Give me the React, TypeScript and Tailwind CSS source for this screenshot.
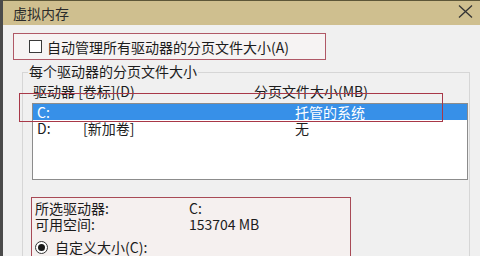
import React from "react";

const font = { fontFamily: '"Noto Sans CJK SC", "Noto Sans", sans-serif' };

const rows = [
  { drive: "C:", label: "", size: "托管的系统", selected: true },
  { drive: "D:", label: "[新加卷]", size: "无", selected: false },
];

export default function App() {
  return (
    <div
      className="relative w-[480px] h-[256px] overflow-hidden bg-[#f0f0f0] border-l-[3px] border-[#4a4a4a] text-[14px] text-[#1c1c1c]"
      style={font}
    >
      {/* Title bar */}
      <div className="h-[25px] bg-[#cfbf8f] border-t border-[#5d5638] flex items-center justify-between pl-[10px] pr-[7px]">
        <span className="text-[14px] leading-[16px] text-[#2a2a2a]">虚拟内存</span>
        <svg width="15" height="13" viewBox="0 0 15 13" className="mb-[4px]">
          <path d="M1 0.5 L14 12.5 M14 0.5 L1 12.5" stroke="#333" strokeWidth="1.3" fill="none" />
        </svg>
      </div>

      {/* Auto manage checkbox */}
      <div className="mt-[8px] ml-[10px] w-[313px] h-[27px] border border-[#b05866] bg-[#f6f3f3] flex items-center">
        <span className="ml-[15px] w-[13px] h-[13px] border border-[#3a3a3a] bg-white" />
        <span className="ml-[5px] leading-[16px]">自动管理所有驱动器的分页文件大小(A)</span>
      </div>

      {/* Group box */}
      <div className="relative mt-[12px] ml-[19px] w-[448px] h-[200px] border border-[#d6d6d6] pl-[9px] pt-[10px]">
        <span className="absolute left-[5px] -top-[10px] px-[1px] bg-[#f0f0f0] leading-[16px]">
          每个驱动器的分页文件大小
        </span>

        <div className="flex pl-[1px] leading-[16px]">
          <span className="w-[221px]">驱动器 [卷标](D)</span>
          <span>分页文件大小(MB)</span>
        </div>

        <div className="mt-[4px] w-[436px] h-[77px] bg-white border border-[#8c8c8c]">
          {rows.map((r) => (
            <div
              key={r.drive}
              className={
                r.selected
                  ? "flex h-[16px] leading-[16px] pl-[4px] bg-[#3790e8] text-white"
                  : "flex h-[16px] leading-[16px] pl-[4px]"
              }
            >
              <span className="w-[46px]">{r.drive}</span>
              <span className="w-[212px]">{r.label}</span>
              <span>{r.size}</span>
            </div>
          ))}
        </div>

        {/* Selected drive info */}
        <div className="mt-[17px] -ml-[1px] w-[320px] h-[80px] border border-[#a84a56] bg-[#f5f0ef] pl-[3px] pt-[2px]">
          <div className="flex leading-[16px]">
            <span className="w-[154px]">所选驱动器:</span>
            <span>C:</span>
          </div>
          <div className="flex leading-[16px]">
            <span className="w-[154px]">可用空间:</span>
            <span>153704 MB</span>
          </div>
          <div className="mt-[7px] flex items-center h-[16px]">
            <span className="w-[13px] h-[13px] rounded-full border border-[#333] bg-white flex items-center justify-center">
              <span className="w-[7px] h-[7px] rounded-full bg-[#1a1a1a]" />
            </span>
            <span className="ml-[7px] leading-[16px]">自定义大小(C):</span>
          </div>
          <div className="ml-[154px] mt-[1px] w-[108px] h-[20px] border border-[#9a9a9a] bg-white" />
        </div>
      </div>

      {/* Annotation box over header + selected row */}
      <div className="absolute left-[16px] top-[93px] w-[424px] h-[29px] border-[1.5px] border-[#a83848]" />
    </div>
  );
}
